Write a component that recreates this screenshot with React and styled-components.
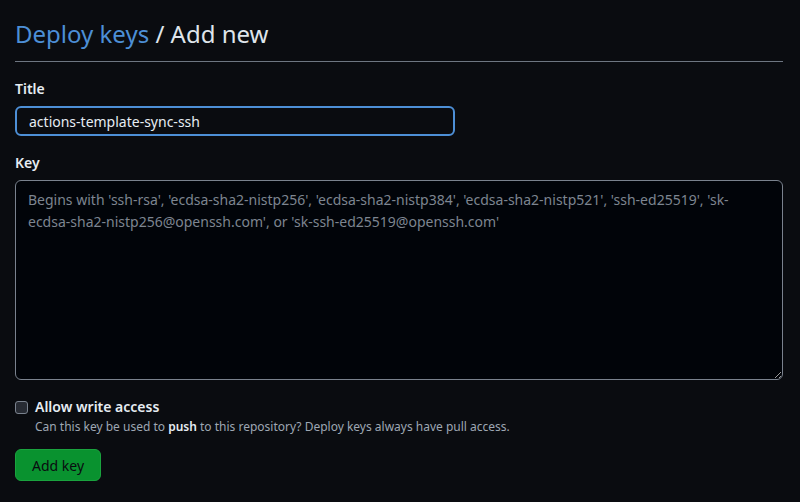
import React, { useState } from "react";
import styled, { createGlobalStyle } from "styled-components";

const GlobalStyle = createGlobalStyle`
  html, body {
    margin: 0;
    background: #0a0c10;
  }
  body {
    font-family: "Noto Sans", "Open Sans", sans-serif;
    color: #e6edf3;
    font-size: 14px;
  }
`;

const App = () => {
  const [title, setTitle] = useState("actions-template-sync-ssh");
  const [key, setKey] = useState("");
  const [canWrite, setCanWrite] = useState(false);

  return (
    <>
      <GlobalStyle />
      <Page>
        <Heading>
          <HeadingLink href="#">Deploy keys</HeadingLink> / Add new
        </Heading>
        <form onSubmit={(e) => e.preventDefault()}>
          <Field>
            <Label htmlFor="title">Title</Label>
            <TitleInput
              id="title"
              value={title}
              onChange={(e) => setTitle(e.target.value)}
            />
          </Field>
          <Field>
            <Label htmlFor="key">Key</Label>
            <KeyArea
              id="key"
              value={key}
              onChange={(e) => setKey(e.target.value)}
              placeholder="Begins with 'ssh-rsa', 'ecdsa-sha2-nistp256', 'ecdsa-sha2-nistp384', 'ecdsa-sha2-nistp521', 'ssh-ed25519', 'sk-ecdsa-sha2-nistp256@openssh.com', or 'sk-ssh-ed25519@openssh.com'"
            />
          </Field>
          <CheckRow>
            <Checkbox
              type="checkbox"
              id="write"
              checked={canWrite}
              onChange={(e) => setCanWrite(e.target.checked)}
            />
            <div>
              <CheckLabel htmlFor="write">Allow write access</CheckLabel>
              <Note>
                Can this key be used to <strong>push</strong> to this
                repository? Deploy keys always have pull access.
              </Note>
            </div>
          </CheckRow>
          <SubmitButton type="submit">Add key</SubmitButton>
        </form>
      </Page>
    </>
  );
};

export default App;

const Page = styled.div`
  padding: 16px 17px 0 15px;
`;

const Heading = styled.h2`
  margin: 0 0 17px;
  padding: 1px 0 10px;
  font-size: 24px;
  font-weight: 400;
  line-height: 34px;
  color: #dfe5eb;
  border-bottom: 1px solid #6e7681;
`;

const HeadingLink = styled.a`
  color: #4d8fd6;
  text-decoration: none;
`;

const Field = styled.div`
  margin-bottom: 17px;
`;

const Label = styled.label`
  display: block;
  font-weight: 600;
  font-size: 14px;
  line-height: 20px;
  margin-bottom: 7px;
  color: #e6edf3;
`;

const TitleInput = styled.input`
  box-sizing: border-box;
  width: 440px;
  height: 30px;
  padding: 4px 12px;
  font: inherit;
  font-size: 14px;
  color: #e6edf3;
  background: #0a0c10;
  border: 2px solid #4d8fd6;
  border-radius: 6px;
  outline: none;
`;

const KeyArea = styled.textarea`
  display: block;
  box-sizing: border-box;
  width: 100%;
  height: 200px;
  padding: 8px 12px;
  font: inherit;
  font-size: 14px;
  line-height: 22px;
  color: #e6edf3;
  background: #010409;
  border: 1px solid #7a828e;
  border-radius: 6px;
  outline: none;
  resize: both;

  &::placeholder {
    color: #7d8590;
  }
`;

const CheckRow = styled.div`
  display: flex;
  align-items: flex-start;
  gap: 7px;
`;

const Checkbox = styled.input`
  appearance: none;
  box-sizing: border-box;
  width: 13px;
  height: 13px;
  margin: 4px 0 0;
  background: #272b33;
  border: 1px solid #7a828e;
  border-radius: 3px;
`;

const CheckLabel = styled.label`
  display: block;
  font-weight: 600;
  font-size: 14px;
  line-height: 20px;
  color: #e6edf3;
`;

const Note = styled.p`
  margin: 0;
  font-size: 12px;
  line-height: 20px;
  color: #9ea7b3;

  strong {
    color: #e6edf3;
    font-weight: 600;
  }
`;

const SubmitButton = styled.button`
  margin-top: 12px;
  height: 32px;
  padding: 0 16px;
  font: inherit;
  font-size: 14px;
  color: #0a0c10;
  background: #09922f;
  border: 1px solid #1aa33e;
  border-radius: 6px;
  cursor: pointer;
`;
